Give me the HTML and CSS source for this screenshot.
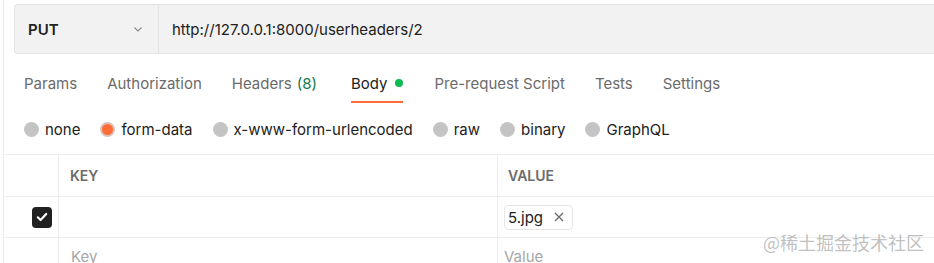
FILE: index.html
```html
<!DOCTYPE html>
<html lang="en">
<head>
    <meta charset="UTF-8">
    <title>PUT userheaders</title>
    <link rel="stylesheet" href="styles.css">
</head>
<body>
<div class="panel">
    <div class="urlbar">
        <div class="method">
            <span>PUT</span>
            <svg class="chevron" width="12" height="12" viewBox="0 0 12 12"><path d="M2.5 4.5 L6 8 L9.5 4.5" fill="none" stroke="#8a8a8a" stroke-width="1.1"/></svg>
        </div>
        <div class="url">http://127.0.0.1:8000/userheaders/2</div>
    </div>

    <div class="tabs">
        <span class="tab">Params</span>
        <span class="tab">Authorization</span>
        <span class="tab">Headers <em class="count">(8)</em></span>
        <span class="tab active">Body <i class="dot"></i></span>
        <span class="tab">Pre-request Script</span>
        <span class="tab">Tests</span>
        <span class="tab">Settings</span>
    </div>

    <div class="modes">
        <label class="mode"><i class="radio"></i>none</label>
        <label class="mode"><i class="radio on"></i>form-data</label>
        <label class="mode"><i class="radio"></i>x-www-form-urlencoded</label>
        <label class="mode"><i class="radio"></i>raw</label>
        <label class="mode"><i class="radio"></i>binary</label>
        <label class="mode"><i class="radio"></i>GraphQL</label>
    </div>

    <div class="table">
        <div class="row head">
            <div class="cell check"></div>
            <div class="cell key">KEY</div>
            <div class="cell value">VALUE</div>
        </div>
        <div class="row">
            <div class="cell check">
                <span class="checkbox">
                    <svg width="14" height="14" viewBox="0 0 14 14"><path d="M2.8 7.3 L5.6 10 L11.2 4" fill="none" stroke="#fff" stroke-width="2.2" stroke-linecap="round" stroke-linejoin="round"/></svg>
                </span>
            </div>
            <div class="cell key"></div>
            <div class="cell value">
                <span class="chip">5.jpg
                    <svg class="close" width="10" height="10" viewBox="0 0 10 10"><path d="M1 1 L9 9 M9 1 L1 9" stroke="#6b6b6b" stroke-width="1.3"/></svg>
                </span>
            </div>
        </div>
        <div class="row">
            <div class="cell check"></div>
            <div class="cell key placeholder">Key</div>
            <div class="cell value placeholder">Value</div>
        </div>
    </div>

    <div class="watermark">@稀土掘金技术社区</div>
</div>
</body>
</html>
```

FILE: styles.css
```css
*{
    margin: 0;
    padding: 0;
    box-sizing: border-box;
}
body{
    font-family: Inter, "Noto Sans", sans-serif;
    background: #fff;
    color: #212121;
    overflow: hidden;
}
.panel{
    position: relative;
    margin-left: 3px;
    height: 263px;
    border-left: 1px solid #ececec;
    overflow: hidden;
}

/* url bar */
.urlbar{
    display: flex;
    height: 50px;
    margin: 4px 0 0 10px;
    background: #f2f2f2;
    border: 1px solid #e3e3e3;
    border-right: none;
    border-radius: 4px 0 0 4px;
}
.method{
    width: 144px;
    display: flex;
    align-items: center;
    justify-content: space-between;
    padding: 0 14px 0 13px;
    border-right: 1px solid #e3e3e3;
    font-weight: 600;
    font-size: 15px;
}
.url{
    display: flex;
    align-items: center;
    padding-left: 13px;
    font-size: 15px;
    color: #212121;
}

/* tabs */
.tabs{
    display: flex;
    height: 49px;
    padding-left: 20px;
    font-size: 15px;
    color: #6b6b6b;
}
.tab{
    display: flex;
    align-items: center;
    padding-top: 11px;
    margin-right: 30px;
    border-bottom: 2px solid transparent;
}
.tab .count{
    font-style: normal;
    color: #0f7b4a;
    margin-left: 5px;
}
.tab.active{
    margin-left: 4px;
    margin-right: 31px;
    color: #212121;
    border-bottom-color: #ff6c37;
}
.dot{
    display: inline-block;
    width: 8px;
    height: 8px;
    margin-left: 8px;
    border-radius: 50%;
    background: #0cbb52;
}

/* body modes */
.modes{
    display: flex;
    align-items: center;
    height: 51px;
    padding: 2px 0 0 20px;
    font-size: 15px;
    color: #212121;
}
.mode{
    display: flex;
    align-items: center;
    margin-right: 20px;
}
.radio{
    width: 15px;
    height: 15px;
    border-radius: 50%;
    background: #c4c4c4;
    margin-right: 6px;
}
.radio.on{
    background: #ff6c37;
    border: 2px solid #d9c2b5;
}

/* table */
.table{
    border-top: 1px solid #ededed;
}
.row{
    display: flex;
    height: 41px;
    border-bottom: 1px solid #ededed;
}
.row.head{
    height: 42px;
}
.cell{
    display: flex;
    align-items: center;
    font-size: 15px;
}
.cell.check{
    width: 55px;
    justify-content: flex-end;
    padding-right: 6px;
    border-right: 1px solid #ededed;
}
.cell.key{
    width: 439px;
    padding-left: 11px;
    border-right: 1px solid #ededed;
}
.cell.value{
    flex: 1;
    padding-left: 10px;
}
.head .cell{
    font-size: 14px;
    font-weight: 600;
    color: #6b6b6b;
}
.row:not(.head) .cell.value{
    padding-left: 6px;
}
.checkbox{
    display: flex;
    align-items: center;
    justify-content: center;
    width: 20px;
    height: 21px;
    border-radius: 4px;
    background: #212121;
}
.chip{
    display: flex;
    align-items: center;
    height: 25px;
    padding: 0 8px 0 3px;
    border: 1px solid #e6e6e6;
    border-radius: 4px;
    font-size: 15px;
}
.chip .close{
    margin-left: 11px;
}
.placeholder{
    color: #a6a6a6;
    padding-bottom: 4px;
}
.row .cell.key.placeholder{
    padding-left: 12px;
}

.watermark{
    position: absolute;
    left: 759px;
    top: 229px;
    font-family: "Noto Sans CJK SC", sans-serif;
    font-size: 18px;
    color: rgba(150, 150, 150, 0.6);
    white-space: nowrap;
}
```
